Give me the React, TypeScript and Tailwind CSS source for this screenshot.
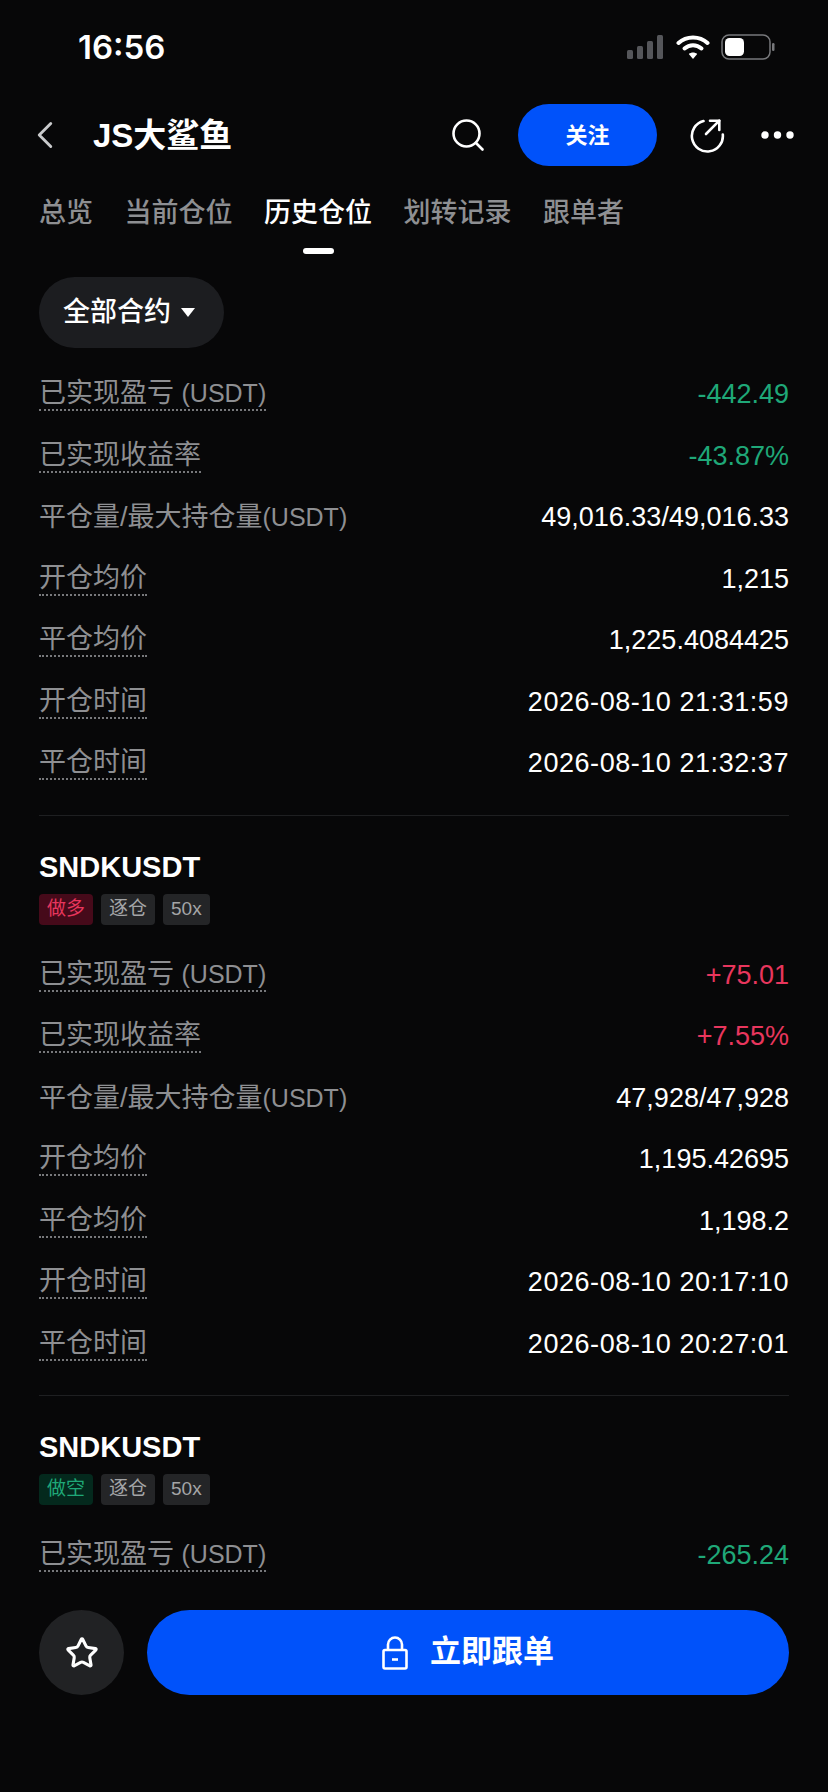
import { ChevronLeft, Star } from 'lucide-react';

interface Row {
  label: string;
  unit?: string;
  value: string;
  color?: string;
  dotted?: boolean;
  date?: boolean;
}

const GREEN = 'text-[#1fa878]';
const RED = 'text-[#e8365d]';

function makeRows(pnl: string, rate: string, color: string, size: string, open: string, close: string, openAt: string, closeAt: string): Row[] {
  return [
    { label: '已实现盈亏 ', unit: '(USDT)', value: pnl, color, dotted: true },
    { label: '已实现收益率', value: rate, color, dotted: true },
    { label: '平仓量/最大持仓量', unit: '(USDT)', value: size },
    { label: '开仓均价', value: open, dotted: true },
    { label: '平仓均价', value: close, dotted: true },
    { label: '开仓时间', value: openAt, dotted: true, date: true },
    { label: '平仓时间', value: closeAt, dotted: true, date: true },
  ];
}

const first = makeRows('-442.49', '-43.87%', GREEN, '49,016.33/49,016.33', '1,215', '1,225.4084425', '2026-08-10 21:31:59', '2026-08-10 21:32:37');
const second = makeRows('+75.01', '+7.55%', RED, '47,928/47,928', '1,195.42695', '1,198.2', '2026-08-10 20:17:10', '2026-08-10 20:27:01');
const third = makeRows('-265.24', '', GREEN, '', '', '', '', '').slice(0, 1);

const TABS = ['总览', '当前仓位', '历史仓位', '划转记录', '跟单者'];

function StatRow({ row }: { row: Row }) {
  return (
    <div className="flex h-[61.5px] items-center justify-between">
      <span className={`text-[27px] leading-[31px] text-[#8e8f92] ${row.dotted ? 'border-b-2 border-dotted border-[#77787b]' : ''}`}>
        {row.label}
        {row.unit && <span className="text-[25px]">{row.unit}</span>}
      </span>
      <span className={`text-[27px] leading-[31px] ${row.date ? 'tracking-[0.55px]' : ''} ${row.color ?? 'text-white'}`}>{row.value}</span>
    </div>
  );
}

function Tag({ text, cls }: { text: string; cls: string }) {
  return <span className={`flex h-[31px] items-center rounded-[4px] px-[8px] text-[19px] ${cls}`}>{text}</span>;
}

function PositionHead({ short }: { short?: boolean }) {
  return (
    <div className="flex flex-col">
      <div className="text-[29px] font-bold leading-[36px] text-white">SNDKUSDT</div>
      <div className="mt-[9px] mb-[20px] flex gap-[8px]">
        {short ? (
          <Tag text="做空" cls="bg-[#04291d] text-[#1fa878]" />
        ) : (
          <Tag text="做多" cls="bg-[#460a1a] text-[#e8365d]" />
        )}
        <Tag text="逐仓" cls="bg-[#242527] text-[#a4a5a7]" />
        <Tag text="50x" cls="bg-[#242527] text-[#a4a5a7]" />
      </div>
    </div>
  );
}

function StatusBar() {
  return (
    <div className="flex h-[94px] items-center justify-between pl-[78px] pr-[53px]">
      <span className="font-['Inter'] text-[33px] font-semibold leading-none text-white">16:56</span>
      <div className="flex items-center gap-[11px]">
        <svg width="38" height="24" viewBox="0 0 38 24" fill="#55565a">
          <rect x="0" y="15" width="6" height="9" rx="1.5" />
          <rect x="10" y="11" width="6" height="13" rx="1.5" />
          <rect x="20" y="6" width="6" height="18" rx="1.5" />
          <rect x="30" y="0" width="6" height="24" rx="1.5" />
        </svg>
        <svg width="34" height="26" viewBox="0 0 34 26" fill="none" stroke="#fff" strokeWidth="4" strokeLinecap="round">
          <path d="M2.5 9 C 10.5 1.5, 23.5 1.5, 31.5 9" />
          <path d="M8.5 14.5 C 13.5 10, 20.5 10, 25.5 14.5" />
          <path d="M17 25 L12.8 20 C 15 18, 19 18, 21.2 20 Z" fill="#fff" stroke="none" />
        </svg>
        <svg width="54" height="26" viewBox="0 0 54 26" fill="none">
          <rect x="1" y="1" width="48" height="24" rx="7" stroke="#77787b" strokeWidth="1.5" />
          <rect x="4" y="4" width="19" height="18" rx="4.5" fill="#fff" />
          <rect x="51" y="9" width="2.5" height="8" rx="1.2" fill="#77787b" />
        </svg>
      </div>
    </div>
  );
}

export default function App() {
  return (
    <div
      className="flex h-[1792px] w-[828px] flex-col overflow-hidden bg-[#070708]"
      style={{ fontFamily: '"Liberation Sans", "Noto Sans CJK SC", sans-serif' }}
    >
      <StatusBar />

      {/* Title bar */}
      <div className="flex h-[82px] items-center pl-[22px] pr-[34px]">
        <ChevronLeft size={46} strokeWidth={1.5} className="text-[#c9cacc]" />
        <span className="ml-[25px] text-[33px] font-bold leading-none text-white">JS大鲨鱼</span>
        <svg className="ml-auto" width="34" height="34" viewBox="0 0 34 34" fill="none" stroke="#fff" strokeWidth="2.6" strokeLinecap="round">
          <circle cx="15.5" cy="15.5" r="13" />
          <path d="M25 25 L31.5 31.5" />
        </svg>
        <button className="ml-[33px] flex h-[62px] w-[139px] items-center justify-center rounded-full bg-[#0052fa] text-[22px] font-semibold text-white">
          关注
        </button>
        <svg className="ml-[33px]" width="36" height="36" viewBox="0 0 36 36" fill="none" stroke="#fff" strokeWidth="2.6" strokeLinecap="round" strokeLinejoin="round">
          <path d="M13.5 4 A15.5 15.5 0 1 0 32.8 17.5" />
          <path d="M16 17 L29.3 3.7" />
          <path d="M20 3.7 H29.3 V13" />
        </svg>
        <svg className="ml-[35px]" width="33" height="10" viewBox="0 0 33 10" fill="#fff">
          <circle cx="4" cy="5" r="3.7" />
          <circle cx="16.5" cy="5" r="3.7" />
          <circle cx="29" cy="5" r="3.7" />
        </svg>
      </div>

      {/* Tabs */}
      <div className="mt-[18px] flex gap-[31.5px] pl-[39px]">
        {TABS.map((tab, i) => (
          <div key={tab} className="flex flex-col items-center">
            <span className={`text-[27px] font-medium leading-[38px] ${i === 2 ? 'text-white' : 'text-[#8e8f92]'}`}>{tab}</span>
            <span className={`mt-[16px] h-[6px] w-[31px] rounded-full ${i === 2 ? 'bg-white' : 'bg-transparent'}`} />
          </div>
        ))}
      </div>

      {/* Filter */}
      <div className="mt-[23px] pl-[39px]">
        <button className="flex h-[71px] w-[185px] items-center gap-[10px] rounded-full bg-[#1c1d20] pl-[24px] text-[27px] font-medium text-white">
          全部合约
          <span className="h-0 w-0 border-x-[7px] border-t-[9px] border-x-transparent border-t-white" />
        </button>
      </div>

      {/* Positions */}
      <div className="mt-[16px] min-h-0 flex-1 overflow-hidden px-[39px]">
        {first.map((row) => (
          <StatRow key={row.label} row={row} />
        ))}
        <div className="mt-[20px] mb-[33px] h-px bg-[#1e1f21]" />
        <PositionHead />
        {second.map((row) => (
          <StatRow key={row.label} row={row} />
        ))}
        <div className="mt-[20px] mb-[33px] h-px bg-[#1e1f21]" />
        <PositionHead short />
        {third.map((row) => (
          <StatRow key={row.label} row={row} />
        ))}
      </div>

      {/* Footer */}
      <div className="flex h-[212px] gap-[23px] px-[39px] pt-[30px]">
        <button className="flex h-[85px] w-[85px] items-center justify-center rounded-full bg-[#212224]">
          <Star size={34} strokeWidth={2.2} className="text-white" />
        </button>
        <button className="flex h-[85px] flex-1 items-center justify-center gap-[22px] rounded-full bg-[#0052fa] text-[31px] font-semibold text-white">
          <svg width="26" height="34" viewBox="0 0 26 34" fill="none" stroke="#fff" strokeWidth="2.6">
            <rect x="1.5" y="14" width="23" height="18.5" rx="1.5" />
            <path d="M6 14 V8.5 A7 7 0 0 1 20 8.5 V14" />
            <path d="M10 23.5 H16" />
          </svg>
          立即跟单
        </button>
      </div>
    </div>
  );
}
